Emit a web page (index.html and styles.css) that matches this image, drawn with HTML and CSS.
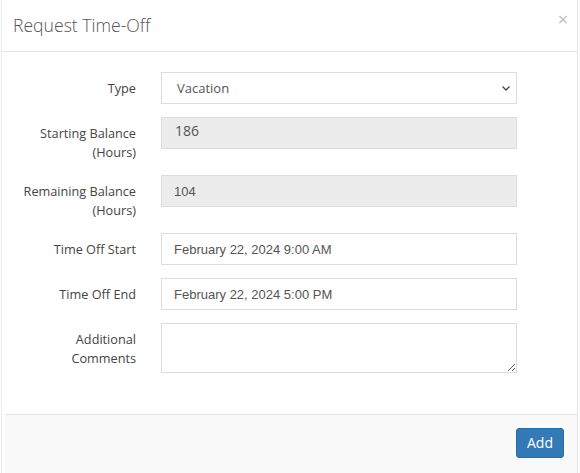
FILE: index.html
```html
<!DOCTYPE html>
<html lang="en">
<head>
    <meta charset="UTF-8">
    <meta name="viewport" content="width=device-width, initial-scale=1.0">
    <title>Request Time-Off</title>
    <link rel="stylesheet" href="styles.css">
</head>
<body>
    <div class="modal">
        <div class="modal-header">
            <h4 class="modal-title">Request Time-Off</h4>
            <button type="button" class="close">&times;</button>
        </div>
        <div class="modal-body">
            <form class="form-horizontal">
                <div class="form-group">
                    <label class="control-label" for="type">Type</label>
                    <div class="select-wrap">
                        <select id="type" class="form-control">
                            <option>Vacation</option>
                            <option>Sick</option>
                            <option>Personal</option>
                        </select>
                        <svg class="caret" width="10" height="7" viewBox="0 0 10 7"><path d="M1.5 1.5 L5 5 L8.5 1.5" fill="none" stroke="#444" stroke-width="1.3"/></svg>
                    </div>
                </div>
                <div class="form-group">
                    <label class="control-label" for="start_balance">Starting Balance (Hours)</label>
                    <input type="text" id="start_balance" class="form-control balance-big" value="186" disabled>
                </div>
                <div class="form-group">
                    <label class="control-label" for="remain_balance">Remaining Balance (Hours)</label>
                    <input type="text" id="remain_balance" class="form-control plain" value="104" disabled>
                </div>
                <div class="form-group">
                    <label class="control-label" for="start">Time Off Start</label>
                    <input type="text" id="start" class="form-control plain" value="February 22, 2024 9:00 AM">
                </div>
                <div class="form-group">
                    <label class="control-label" for="end">Time Off End</label>
                    <input type="text" id="end" class="form-control plain" value="February 22, 2024 5:00 PM">
                </div>
                <div class="form-group">
                    <label class="control-label" for="comments">Additional Comments</label>
                    <textarea id="comments" class="form-control comments"></textarea>
                </div>
            </form>
        </div>
        <div class="modal-footer">
            <button type="button" class="btn btn-primary">Add</button>
        </div>
    </div>
</body>
</html>
```

FILE: styles.css
```css
body {
    margin: 0;
    padding: 0;
    font-family: 'Open Sans', sans-serif;
    font-size: 13px;
    color: #444;
    background: #fff;
    overflow: hidden;
}

.modal {
    margin-left: 1px;
    width: 577px;
    height: 473px;
    box-sizing: border-box;
    border-left: 1px solid #ececec;
    border-right: 1px solid #e5e5e5;
    display: flex;
    flex-direction: column;
}

.modal-header {
    height: 52px;
    box-sizing: border-box;
    border-bottom: 1px solid #e5e5e5;
    display: flex;
    align-items: center;
    justify-content: space-between;
    padding: 0 9px 2px 11px;
}

.modal-title {
    margin: 0;
    font-size: 17.6px;
    font-weight: 300;
    color: #555;
}

.close {
    align-self: flex-start;
    margin-top: 9px;
    padding: 0;
    border: 0;
    background: transparent;
    font-family: 'Open Sans', sans-serif;
    font-size: 18px;
    line-height: 20px;
    color: #bdbdbd;
}

.modal-body {
    padding: 20px 0 0 0;
    flex: 1;
}

.form-group {
    display: grid;
    grid-template-columns: 120px 356px;
    column-gap: 25px;
    margin: 0 0 13px 14px;
}

.control-label {
    text-align: right;
    padding-top: 7px;
    line-height: 19px;
    font-size: 12.7px;
}

.form-control {
    height: 32px;
    width: 100%;
    box-sizing: border-box;
    border: 1px solid #dcdcdc;
    border-radius: 0;
    padding: 0 12px;
    font-family: 'Open Sans', sans-serif;
    font-size: 13px;
    color: #555;
    background: #fff;
}

.form-control:disabled {
    background: #ececec;
    color: #555;
}

.plain {
    font-family: 'Liberation Sans', Arial, sans-serif;
}

.balance-big {
    font-size: 14px;
    padding-bottom: 5px;
    padding-left: 13px;
}

.select-wrap {
    position: relative;
}

.select-wrap select {
    appearance: none;
    padding-left: 15px;
}

.caret {
    position: absolute;
    right: 6px;
    top: 13px;
}

.comments {
    height: 50px;
    padding: 6px 12px;
    resize: vertical;
}

.modal-footer {
    margin-left: 3px;
    border-top: 1px solid #e5e5e5;
    background: #f9f9f9;
    padding: 13px 13px 15px;
    display: flex;
    justify-content: flex-end;
}

.btn {
    height: 30px;
    padding: 0 10px 1px;
    font-family: 'Open Sans', sans-serif;
    font-size: 14px;
    border-radius: 3px;
}

.btn-primary {
    background-color: #337ab7;
    border: 1px solid #2e6da4;
    color: #fff;
}
```
